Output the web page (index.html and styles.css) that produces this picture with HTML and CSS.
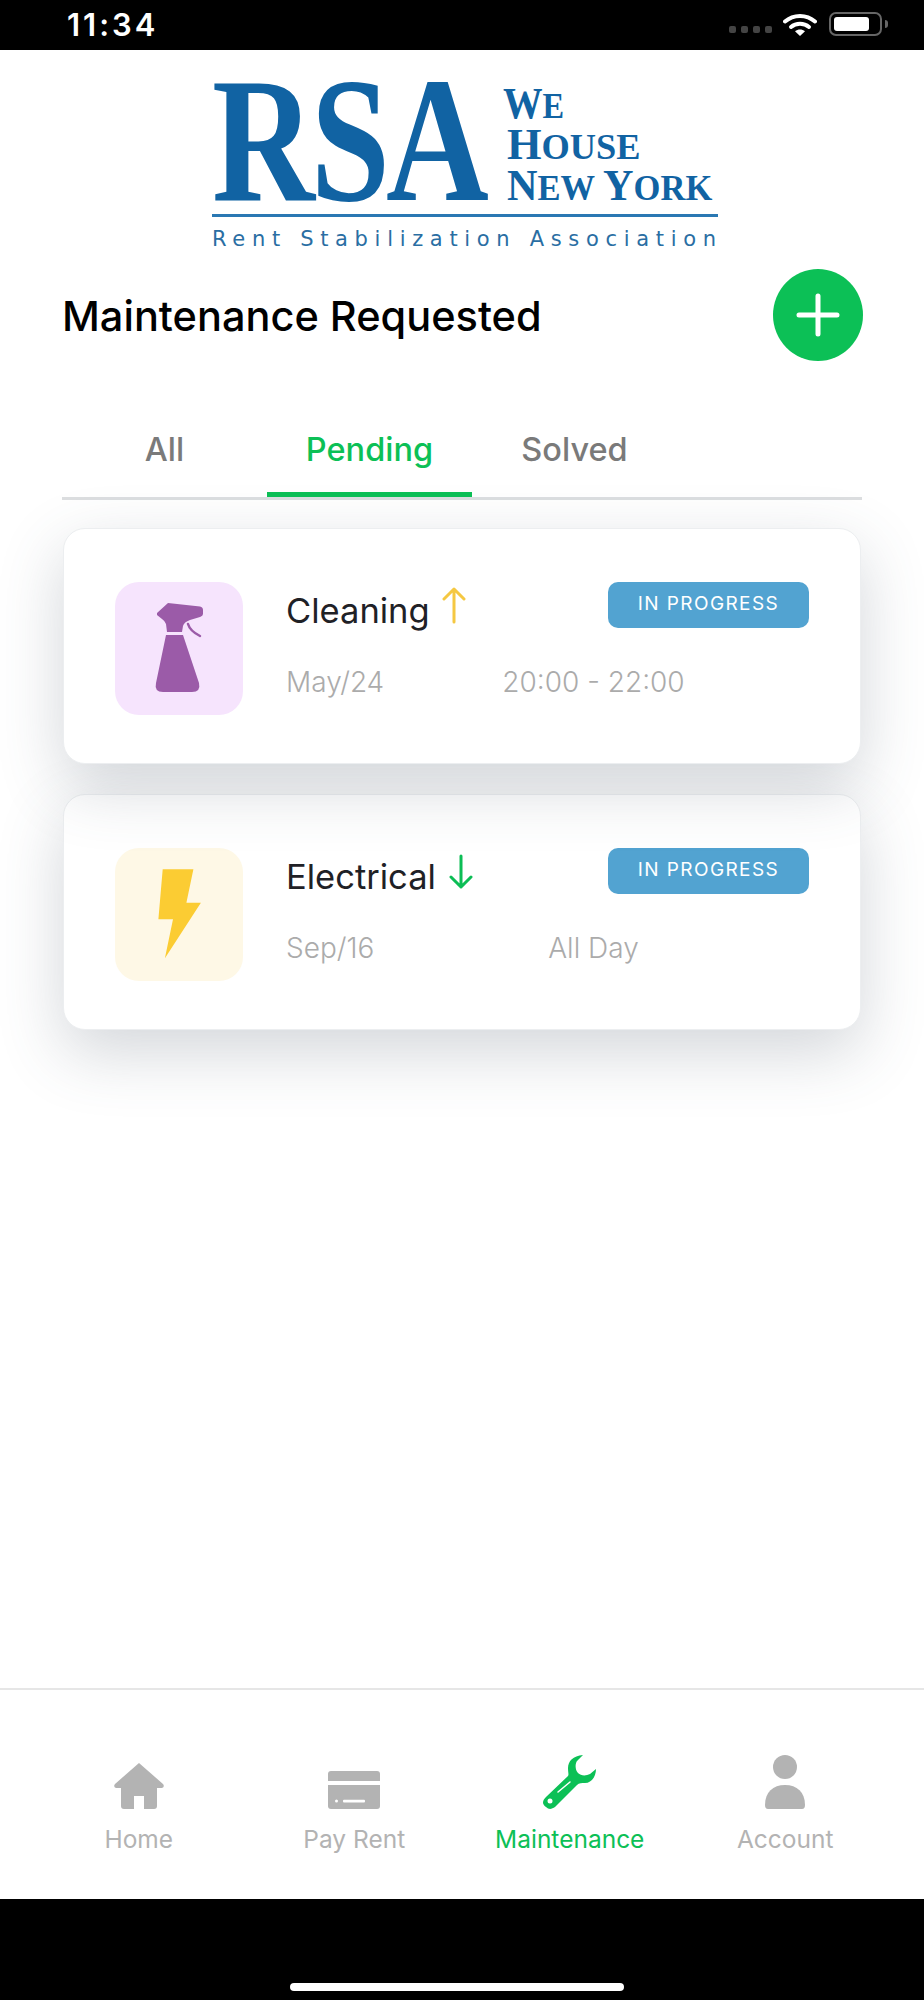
FILE: index.html
```html
<!DOCTYPE html>
<html lang="en">
<head>
    <meta charset="UTF-8">
    <title>Maintenance Requested</title>
    <link rel="stylesheet" href="styles.css">
</head>
<body>
    <div class="app">
        <div class="status-bar">
            <span class="clock">11:34</span>
            <div class="status-icons">
                <div class="signal"><i></i><i></i><i></i><i></i></div>
                <svg class="wifi" width="34" height="23" viewBox="0 0 34 23">
                    <path d="M2 8.5C10.500 1 23.500 1 32 8.500" fill="none" stroke="#fff" stroke-width="4" stroke-linecap="round"/>
                    <path d="M8 14C13 9.800 21 9.800 26 14" fill="none" stroke="#fff" stroke-width="4" stroke-linecap="round"/>
                    <path d="M12 18.200C15 16 19 16 22 18.200L17 23Z" fill="#fff"/>
                </svg>
                <div class="battery"><div class="battery-level"></div></div>
                <div class="battery-nub"></div>
            </div>
        </div>

        <svg class="logo" width="510" height="170" viewBox="0 0 510 170">
            <text class="logo-big" transform="translate(0 120) scale(0.8 1)">RSA</text>
            <text class="logo-word" transform="translate(291 38) scale(0.9 1)">W<tspan class="logo-small">E</tspan></text>
            <text class="logo-word" transform="translate(295 79) scale(1.01 1)">H<tspan class="logo-small">OUSE</tspan></text>
            <text class="logo-word" transform="translate(295 120) scale(0.96 1)">N<tspan class="logo-small">EW </tspan>Y<tspan class="logo-small">ORK</tspan></text>
            <rect x="0" y="134" width="506" height="3" fill="#2a78b3"/>
            <text class="logo-tag" x="0" y="166" textLength="504">Rent Stabilization Association</text>
        </svg>

        <div class="page-head">
            <h1>Maintenance Requested</h1>
            <button class="add-btn">
                <svg width="44" height="44" viewBox="0 0 44 44">
                    <path d="M22 3V41M3 22H41" stroke="#fff" stroke-width="5" stroke-linecap="round"/>
                </svg>
            </button>
        </div>

        <div class="tabs">
            <div class="tab">All</div>
            <div class="tab active">Pending</div>
            <div class="tab">Solved</div>
        </div>

        <div class="cards">
            <div class="card card-first">
                <div class="tile tile-purple">
                    <svg width="128" height="133" viewBox="15 12 128 133">
                        <path d="M57 43L68 33L100 36.500Q103 37 103 40V44Q103 46 100 47L90 50Q84 52 83 56L82 62H67L66 54Q65 51 62 49L57 45Z" fill="#9b5ba8"/>
                        <path d="M66 65H83L99 113Q101 122 92 122H63Q54 122 56 113Z" fill="#9b5ba8"/>
                        <path d="M88 54Q90 61 100 66" fill="none" stroke="#9b5ba8" stroke-width="2.500" stroke-linecap="round"/>
                    </svg>
                </div>
                <div class="card-info">
                    <div class="card-top">
                        <div class="card-title">
                            Cleaning
                            <svg class="arrow" width="24" height="37" viewBox="0 0 24 37">
                                <path d="M12 35V2M2 12L12 2L22 12" fill="none" stroke="#f5c842" stroke-width="3" stroke-linecap="round" stroke-linejoin="round"/>
                            </svg>
                        </div>
                        <span class="badge">IN PROGRESS</span>
                    </div>
                    <div class="card-when">
                        <span>May/24</span>
                        <span class="when-time">20:00 - 22:00</span>
                    </div>
                </div>
            </div>

            <div class="card">
                <div class="tile tile-yellow">
                    <svg width="128" height="133" viewBox="0 0 128 133">
                        <path d="M47.700 21.300H78.400L71.400 54.700H85.900L49.900 110.300L58 71.300H43.400Z" fill="#fbcc33"/>
                    </svg>
                </div>
                <div class="card-info">
                    <div class="card-top">
                        <div class="card-title">
                            Electrical
                            <svg class="arrow" width="26" height="35" viewBox="0 0 26 35">
                                <path d="M13 2V33M3 23L13 33L23 23" fill="none" stroke="#0cbd55" stroke-width="3" stroke-linecap="round" stroke-linejoin="round"/>
                            </svg>
                        </div>
                        <span class="badge">IN PROGRESS</span>
                    </div>
                    <div class="card-when">
                        <span>Sep/16</span>
                        <span class="when-time">All Day</span>
                    </div>
                </div>
            </div>
        </div>

        <div class="nav">
            <div class="nav-item">
                <svg width="52" height="46" viewBox="0 0 52 46">
                    <path d="M26 0L50 21Q52 24 49 25H44V43Q44 46 41 46H31V33H21V46H11Q8 46 8 43V25H3Q0 24 2 21Z" fill="#b3b3b3"/>
                </svg>
                <span>Home</span>
            </div>
            <div class="nav-item">
                <svg width="52" height="38" viewBox="0 0 52 38">
                    <path d="M3 0H49Q52 0 52 3V10H0V3Q0 0 3 0Z" fill="#b3b3b3"/>
                    <path d="M0 14H52V35Q52 38 49 38H3Q0 38 0 35Z" fill="#b3b3b3"/>
                    <circle cx="8.500" cy="30" r="1.500" fill="#fff"/>
                    <rect x="15" y="28.800" width="22" height="2.600" rx="1" fill="#fff"/>
                </svg>
                <span>Pay Rent</span>
            </div>
            <div class="nav-item active">
                <svg width="53" height="54" viewBox="0 0 53 54">
                    <path d="M40 0C30 1 25 6 25 13C25 17 26 20 25 21L3 42C-1 46 -1 49 3 52C6 55 9 54 12 52L34 30C36 28 39 28 42 28C49 28 53 21 53 14L47 19C43 21 38 21 35 18C32 15 32 9 34 6Z" fill="#0cc056"/>
                    <circle cx="7" cy="46" r="2.500" fill="#fff"/>
                    <path d="M15 37L27 27" stroke="#fff" stroke-width="1.500" stroke-linecap="round"/>
                </svg>
                <span>Maintenance</span>
            </div>
            <div class="nav-item">
                <svg width="40" height="54" viewBox="0 0 40 54">
                    <circle cx="20" cy="12" r="12" fill="#b3b3b3"/>
                    <path d="M0 50C0 37 8 30 20 30C32 30 40 37 40 50Q40 54 37 54H3Q0 54 0 50Z" fill="#b3b3b3"/>
                </svg>
                <span>Account</span>
            </div>
        </div>

        <div class="home-area">
            <div class="home-bar"></div>
        </div>
    </div>
</body>
</html>
```

FILE: styles.css
```css
* {
    box-sizing: border-box;
}
body {
    margin: 0;
    background-color: #fff;
    font-family: Inter, "Liberation Sans", sans-serif;
}
.app {
    display: flex;
    flex-direction: column;
    width: 924px;
    height: 2000px;
    overflow: hidden;
}

/* status bar */
.status-bar {
    display: flex;
    justify-content: space-between;
    align-items: center;
    flex: none;
    height: 50px;
    padding: 0 36px 2px 67px;
    background: #000;
}
.clock {
    color: #fff;
    font-size: 31px;
    font-weight: 600;
    letter-spacing: 3px;
}
.status-icons {
    display: flex;
    align-items: center;
}
.signal {
    display: flex;
    gap: 5px;
    margin: 10px 11px 0 0;
}
.signal i {
    width: 7px;
    height: 7px;
    border-radius: 2px;
    background: #444;
}
.wifi {
    margin-right: 12px;
}
.battery {
    width: 53px;
    height: 24px;
    padding: 3px;
    border: 2px solid #666;
    border-radius: 7px;
}
.battery-level {
    width: 35px;
    height: 100%;
    border-radius: 3px;
    background: #fff;
}
.battery-nub {
    width: 3px;
    height: 8px;
    margin-left: 3px;
    border-radius: 0 3px 3px 0;
    background: #666;
}

/* logo */
.logo {
    flex: none;
    margin: 30px 0 0 212px;
    overflow: visible;
}
.logo-big {
    font-family: "Liberation Serif", serif;
    font-size: 178px;
    font-weight: 700;
    letter-spacing: -5px;
    fill: #1163a3;
}
.logo-word {
    font-family: "Liberation Serif", serif;
    font-size: 44px;
    font-weight: 700;
    fill: #1163a3;
}
.logo-small {
    font-size: 36px;
}
.logo-tag {
    font-family: "DejaVu Sans", sans-serif;
    font-size: 21px;
    fill: #2a6ea3;
}

/* heading */
.page-head {
    display: flex;
    justify-content: space-between;
    align-items: center;
    flex: none;
    margin-top: 19px;
    padding: 0 61px 0 62px;
}
h1 {
    margin: 2px 0 0;
    color: #000;
    font-size: 41.500px;
    font-weight: 450;
}
.add-btn {
    display: flex;
    justify-content: center;
    align-items: center;
    width: 90px;
    height: 92px;
    padding: 0;
    border: none;
    border-radius: 50%;
    background-color: #0cc056;
}

/* tabs */
.tabs {
    display: flex;
    flex: none;
    margin: 67px 62px 0;
    border-bottom: 3px solid #dcdee0;
}
.tab {
    width: 205px;
    height: 69px;
    padding-top: 2px;
    border-bottom: 5px solid transparent;
    color: #7a7a7a;
    font-size: 32.500px;
    font-weight: 450;
    text-align: center;
}
.tab.active {
    border-bottom-color: #0cc056;
    color: #0cc056;
}

/* cards */
.cards {
    display: flex;
    flex-direction: column;
    flex: 1;
    gap: 30px;
    padding: 28px 63px 0;
}
.card {
    display: flex;
    position: relative;
    height: 236px;
    padding: 53px 51px 0;
    border: 1px solid #eceef0;
    border-radius: 22px;
    background: #fff;
    box-shadow: 0 22px 65px rgba(70, 85, 100, 0.24);
}
.card-first {
    z-index: 1;
}
.tile {
    flex: none;
    width: 128px;
    height: 133px;
    border-radius: 24px;
}
.tile-purple {
    background-color: #f6e4fd;
}
.tile-yellow {
    background-color: #fef8e6;
}
.card-info {
    flex: 1;
    margin-left: 43px;
}
.card-top {
    display: flex;
    justify-content: space-between;
    align-items: flex-start;
}
.card-title {
    display: flex;
    align-items: center;
    gap: 12px;
    padding-top: 8px;
    color: #1f2126;
    font-size: 34.500px;
    font-weight: 400;
}
.arrow {
    margin: -4px 0 6px;
}
.badge {
    width: 201px;
    height: 46px;
    border-radius: 10px;
    background-color: #52a3d1;
    color: #fff;
    font-size: 19px;
    letter-spacing: 1.400px;
    line-height: 43px;
    text-align: center;
}
.card-when {
    display: grid;
    grid-template-columns: 205px 205px;
    margin-top: 34px;
    color: #ababab;
    font-size: 28px;
    font-weight: 300;
}
.when-time {
    text-align: center;
}

/* bottom nav */
.nav {
    display: grid;
    grid-template-columns: repeat(4, 1fr);
    position: relative;
    z-index: 2;
    flex: none;
    height: 211px;
    padding: 66px 31px 0;
    border-top: 2px solid #e6e6e6;
    background: #fff;
}
.nav-item {
    display: grid;
    grid-template-rows: 53px auto;
    justify-items: center;
    align-items: end;
    height: 100px;
    color: #b3b3b3;
    font-size: 24.500px;
}
.nav-item span {
    align-self: start;
    margin-top: 15px;
}
.nav-item.active {
    color: #0cc056;
}
.home-area {
    display: flex;
    flex: none;
    justify-content: center;
    align-items: flex-end;
    height: 101px;
    padding-bottom: 9px;
    background: #000;
}
.home-bar {
    width: 334px;
    height: 8px;
    margin-right: 10px;
    border-radius: 4px;
    background: #fff;
}
```
